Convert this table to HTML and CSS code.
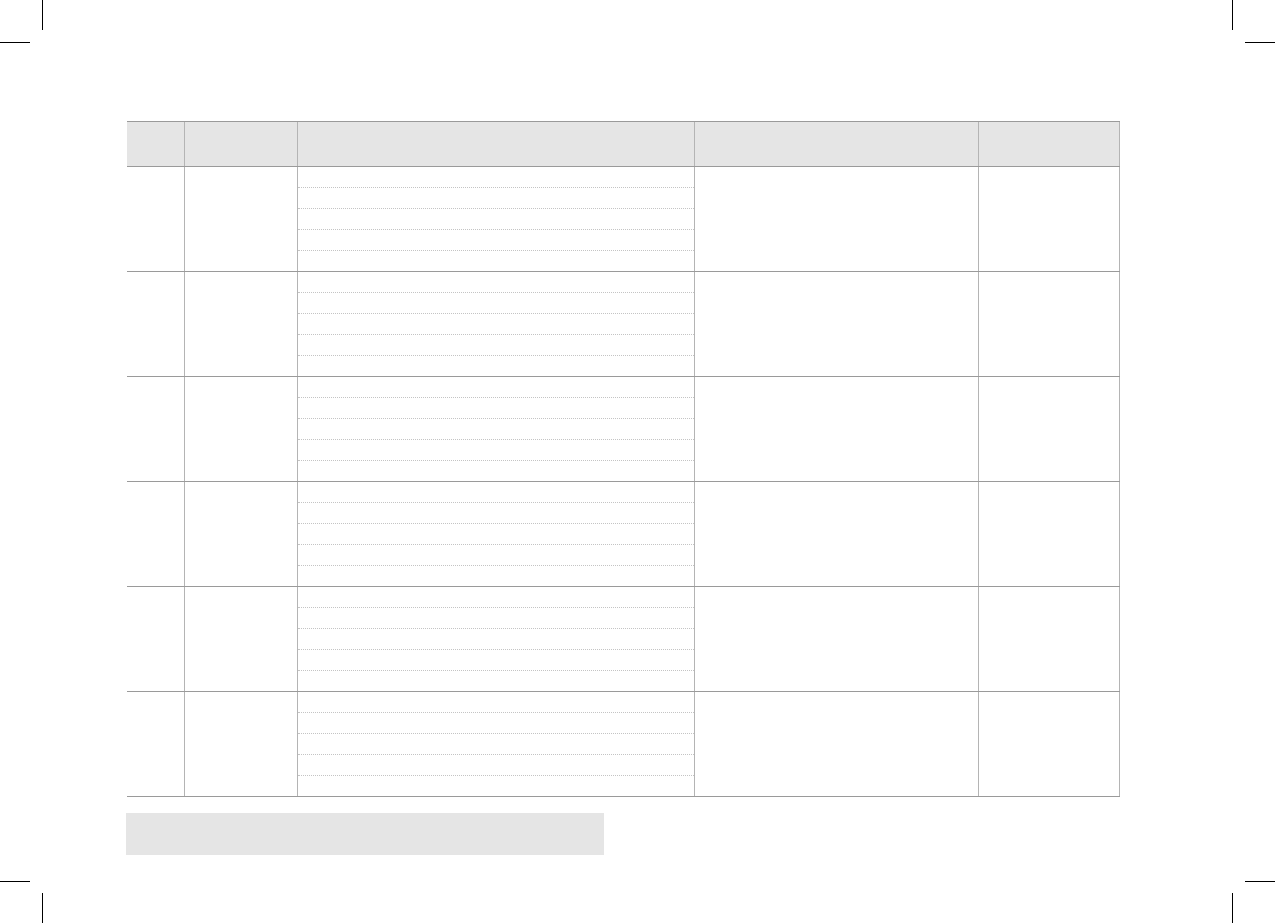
FILE: index.html
```html
<!DOCTYPE html>
<html>
<head>
<meta charset="utf-8">
<link rel="stylesheet" href="styles.css">
</head>
<body>
<div class="crop crop-tl-v"></div>
<div class="crop crop-tl-h"></div>
<div class="crop crop-tr-v"></div>
<div class="crop crop-tr-h"></div>
<div class="crop crop-bl-v"></div>
<div class="crop crop-bl-h"></div>
<div class="crop crop-br-v"></div>
<div class="crop crop-br-h"></div>

<main class="sheet">
  <div class="grid-table">
    <div class="row head">
      <div class="cell"></div><div class="cell"></div><div class="cell"></div><div class="cell"></div><div class="cell"></div>
    </div>
    <div class="row body">
      <div class="cell"></div><div class="cell"></div>
      <div class="cell lines"><div class="line"></div><div class="line"></div><div class="line"></div><div class="line"></div><div class="line"></div></div>
      <div class="cell"></div><div class="cell"></div>
    </div>
    <div class="row body">
      <div class="cell"></div><div class="cell"></div>
      <div class="cell lines"><div class="line"></div><div class="line"></div><div class="line"></div><div class="line"></div><div class="line"></div></div>
      <div class="cell"></div><div class="cell"></div>
    </div>
    <div class="row body">
      <div class="cell"></div><div class="cell"></div>
      <div class="cell lines"><div class="line"></div><div class="line"></div><div class="line"></div><div class="line"></div><div class="line"></div></div>
      <div class="cell"></div><div class="cell"></div>
    </div>
    <div class="row body">
      <div class="cell"></div><div class="cell"></div>
      <div class="cell lines"><div class="line"></div><div class="line"></div><div class="line"></div><div class="line"></div><div class="line"></div></div>
      <div class="cell"></div><div class="cell"></div>
    </div>
    <div class="row body">
      <div class="cell"></div><div class="cell"></div>
      <div class="cell lines"><div class="line"></div><div class="line"></div><div class="line"></div><div class="line"></div><div class="line"></div></div>
      <div class="cell"></div><div class="cell"></div>
    </div>
    <div class="row body">
      <div class="cell"></div><div class="cell"></div>
      <div class="cell lines"><div class="line"></div><div class="line"></div><div class="line"></div><div class="line"></div><div class="line"></div></div>
      <div class="cell"></div><div class="cell"></div>
    </div>
  </div>
  <div class="note"></div>
</main>
</body>
</html>
```

FILE: styles.css
```css
html, body {
  margin: 0;
  padding: 0;
  background: #ffffff;
  font-family: "Liberation Sans", Arial, sans-serif;
}

body {
  position: relative;
  width: 1275px;
  height: 923px;
  overflow: hidden;
}

.crop {
  position: absolute;
  background: #000;
}
.crop-tl-v { left: 42px; top: 0; width: 1px; height: 30px; }
.crop-tl-h { left: 0; top: 42px; width: 30px; height: 1px; }
.crop-tr-v { left: 1232px; top: 0; width: 1px; height: 30px; }
.crop-tr-h { left: 1245px; top: 42px; width: 30px; height: 1px; }
.crop-bl-v { left: 42px; top: 893px; width: 1px; height: 30px; }
.crop-bl-h { left: 0; top: 881px; width: 30px; height: 1px; }
.crop-br-v { left: 1232px; top: 893px; width: 1px; height: 30px; }
.crop-br-h { left: 1245px; top: 881px; width: 30px; height: 1px; }

.sheet {
  padding: 121px 0 0 127px;
}

.grid-table {
  width: 993px;
  border-top: 1px solid #9a9a9a;
}

.row {
  display: grid;
  grid-template-columns: 58px 113px 397px 284px 141px;
  border-bottom: 1px solid #9a9a9a;
}

.head {
  height: 44px;
  background: #e5e5e5;
}

.body {
  height: 104px;
}

.cell {
  box-sizing: border-box;
  border-right: 1px solid #b4b4b4;
}

.lines {
  display: flex;
  flex-direction: column;
}

.line {
  height: 20px;
  border-bottom: 1px dotted #c4c4c4;
}

.line:last-child {
  border-bottom: none;
}

.note {
  margin: 16px 0 0 -1px;
  width: 478px;
  height: 42px;
  background: #e5e5e5;
}
```
